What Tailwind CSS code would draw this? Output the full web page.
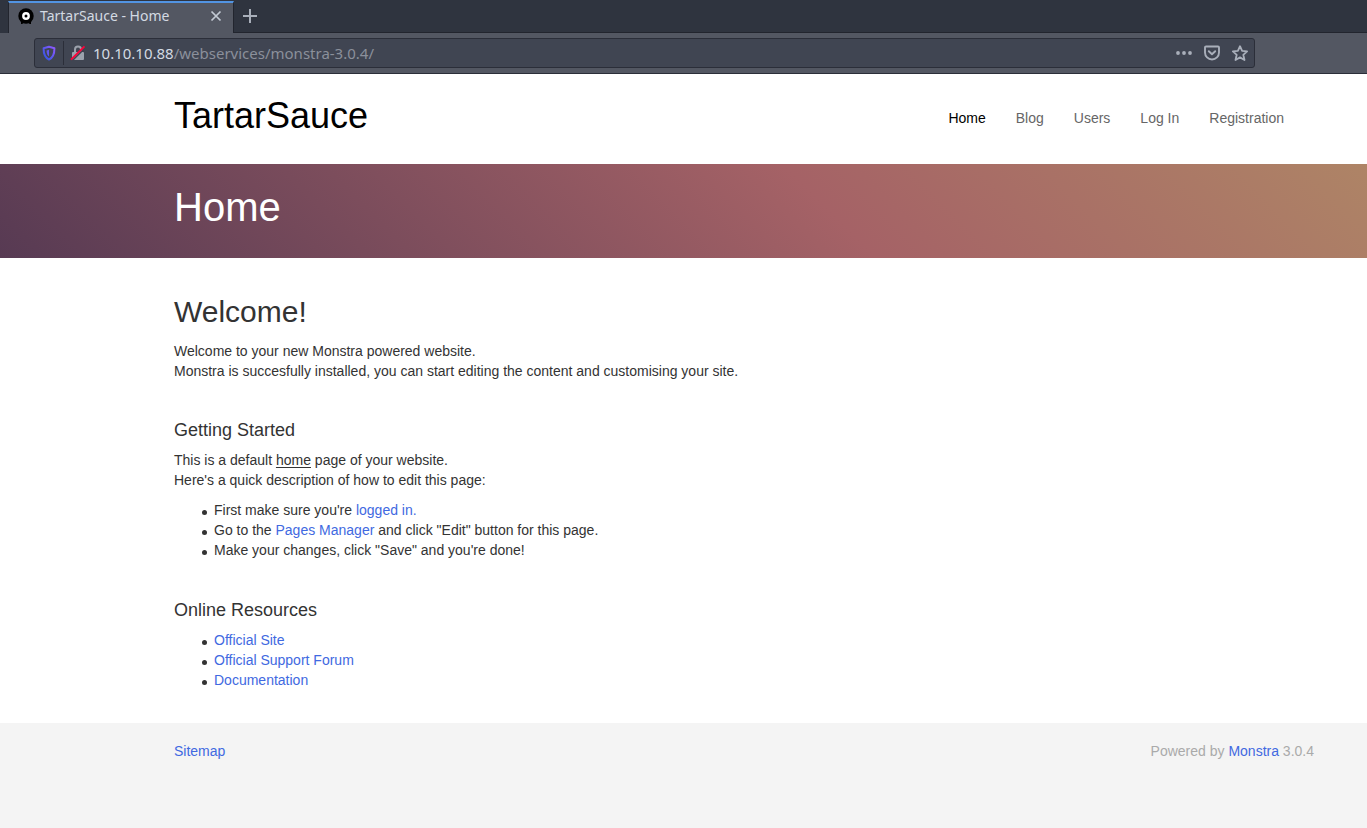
<!DOCTYPE html>
<html lang="en">
<head>
<meta charset="utf-8">
<title>TartarSauce - Home</title>
<script src="https://cdn.jsdelivr.net/npm/@tailwindcss/browser@4"></script>
</head>
<body class="min-h-screen flex flex-col bg-white font-['Liberation_Sans',Arial,sans-serif] text-sm leading-5 text-[#333]">
<div class="font-['Noto_Sans',sans-serif]">
  <div class="flex h-[33px] bg-[#2f343f] pl-2">
    <div class="mt-px flex w-[226px] items-center border-x border-t-2 border-x-[#22252e] border-t-[#5294e2] bg-[#535762] pl-[9px] pr-[9px] pb-1 text-[#d3dae3]">
      <svg class="size-4 shrink-0" viewBox="0 0 16 16" aria-hidden="true"><circle cx="8" cy="8" r="7.700"/><path d="M3 13h3l-1.500 3H3zM10 13h3v3h-1.500z"/><circle cx="8" cy="8" r="2.700" fill="none" stroke="#fff" stroke-width="2.400"/></svg>
      <span class="ml-[6px] grow text-sm">TartarSauce - Home</span>
      <button aria-label="Close tab" class="flex size-4 items-center justify-center"><svg class="size-3" viewBox="0 0 12 12" fill="none" stroke="#c3cad4" stroke-width="1.700"><path d="M1.500 1.500l9 9M10.500 1.500l-9 9"/></svg></button>
    </div>
    <div class="flex grow items-center border-b border-[#22252e] pl-2">
      <button aria-label="New tab" class="size-4"><svg class="size-4" viewBox="0 0 16 16" stroke="#a9afba" stroke-width="2"><path d="M8 1v14M1 8h14"/></svg></button>
    </div>
  </div>
  <div class="flex h-[41px] items-center border-b border-[#2b2e39] bg-[#535762] pl-[34px] pr-28">
    <div class="flex h-[30px] grow items-center rounded-[3px] border border-[#2b2e39] bg-[#404552] pl-[6px] pr-[6px]">
      <svg class="size-4" viewBox="0 0 16 16" fill="none" aria-hidden="true"><defs><linearGradient id="shield" x1="1" y1="0" x2="0" y2="1"><stop stop-color="#9059ff"/><stop offset="1" stop-color="#2b55e0"/></linearGradient></defs><path d="M8 1.800l5.400 1.400c.1 6-1 9.200-5.400 11.300-4.400-2.100-5.500-5.300-5.400-11.300z" stroke="url(#shield)" stroke-width="2" stroke-linejoin="round"/><path d="M8 4.800v6.700c-1.700-1.200-2.400-3-2.400-6z" fill="#6257f0"/></svg>
      <span class="ml-[6px] h-6 w-px bg-[#2b2e39]"></span>
      <svg class="ml-[6px] size-4" viewBox="0 0 16 16" fill="none" aria-hidden="true"><path d="M5 8V4.500a3 3 0 0 1 6 0v3.500" stroke="#9ba1ac" stroke-width="2"/><rect x="2" y="7" width="12" height="8" rx="1" fill="#9ba1ac"/><path d="M2 15.800L15.500 2.500" stroke="#404552" stroke-width="1.600"/><path d="M1 14.700L14.500 1.300" stroke="#ff0039" stroke-width="1.900"/></svg>
      <a href="#" class="ml-[7px] grow text-[15px] text-[#8b909b]"><span class="text-[#d3dae3]">10.10.10.88</span>/webservices/monstra-3.0.4/</a>
      <div class="flex gap-3">
        <button aria-label="Page actions"><svg class="size-4" viewBox="0 0 16 16" fill="#a9afba"><circle cx="2" cy="8" r="1.900"/><circle cx="8" cy="8" r="1.900"/><circle cx="14" cy="8" r="1.900"/></svg></button>
        <button aria-label="Save to Pocket"><svg class="size-4" viewBox="0 0 16 16" fill="none" stroke="#a9afba" stroke-width="1.900" stroke-linecap="round" stroke-linejoin="round"><path d="M2 1.500h12a1 1 0 0 1 1 1v5a7 7 0 0 1-14 0v-5a1 1 0 0 1 1-1z"/><path d="M4.800 6.200L8 9.300l3.200-3.100"/></svg></button>
        <button aria-label="Bookmark this page"><svg class="size-4" viewBox="0 0 16 16" fill="none" stroke="#a9afba" stroke-width="1.800" stroke-linejoin="round"><path d="M8 1.200l2.100 4.700 5 .5-3.800 3.400 1.200 5.200L8 12.400l-4.500 2.600 1.200-5.200L.9 6.400l5-.5z"/></svg></button>
      </div>
    </div>
  </div>
</div>
<header class="flex justify-between pl-[174px] pr-[83px] pt-[22px] pb-[28px]">
  <a href="#" class="text-4xl text-black">TartarSauce</a>
  <nav class="flex items-center gap-[30px] pt-[4px] text-[#666]">
    <a href="#" class="text-black">Home</a><a href="#">Blog</a><a href="#">Users</a><a href="#">Log In</a><a href="#">Registration</a>
  </nav>
</header>
<div class="bg-[linear-gradient(45deg,#573a53_0%,#a56266_60%,#ae8466_100%)] pt-[21px] pb-[29px] pl-[174px]">
  <h1 class="text-[40px] leading-[44px] text-white">Home</h1>
</div>
<main class="pl-[174px] pr-[53px] pt-[37px] pb-[33px]">
  <h2 class="mb-[13px] text-3xl leading-[33px]">Welcome!</h2>
  <p>Welcome to your new Monstra powered website.<br>Monstra is succesfully installed, you can start editing the content and customising your site.</p>
  <h3 class="mt-[39px] mb-[10px] text-lg leading-5">Getting Started</h3>
  <p>This is a default <a href="#" class="underline underline-offset-2">home</a> page of your website.<br>Here's a quick description of how to edit this page:</p>
  <ul class="mt-[10px] pl-10 *:before:-ml-3 *:before:mr-[7px] *:before:inline-block *:before:size-[5px] *:before:rounded-full *:before:bg-[#333] *:before:content-['']">
    <li>First make sure you're <a href="#" class="text-[#4169e1]">logged in.</a></li>
    <li>Go to the <a href="#" class="text-[#4169e1]">Pages Manager</a> and click "Edit" button for this page.</li>
    <li>Make your changes, click "Save" and you're done!</li>
  </ul>
  <h3 class="mt-[40px] mb-[10px] text-lg leading-5">Online Resources</h3>
  <ul class="pl-10 *:before:-ml-3 *:before:mr-[7px] *:before:inline-block *:before:size-[5px] *:before:rounded-full *:before:bg-[#333] *:before:content-['']">
    <li><a href="#" class="text-[#4169e1]">Official Site</a></li>
    <li><a href="#" class="text-[#4169e1]">Official Support Forum</a></li>
    <li><a href="#" class="text-[#4169e1]">Documentation</a></li>
  </ul>
</main>
<footer class="flex grow justify-between bg-[#f4f4f4] pl-[174px] pr-[53px] pt-[18px] text-[#aaa]">
  <a href="#" class="text-[#4169e1]">Sitemap</a>
  <p>Powered by <a href="#" class="text-[#4169e1]">Monstra</a> 3.0.4</p>
</footer>
</body>
</html>
